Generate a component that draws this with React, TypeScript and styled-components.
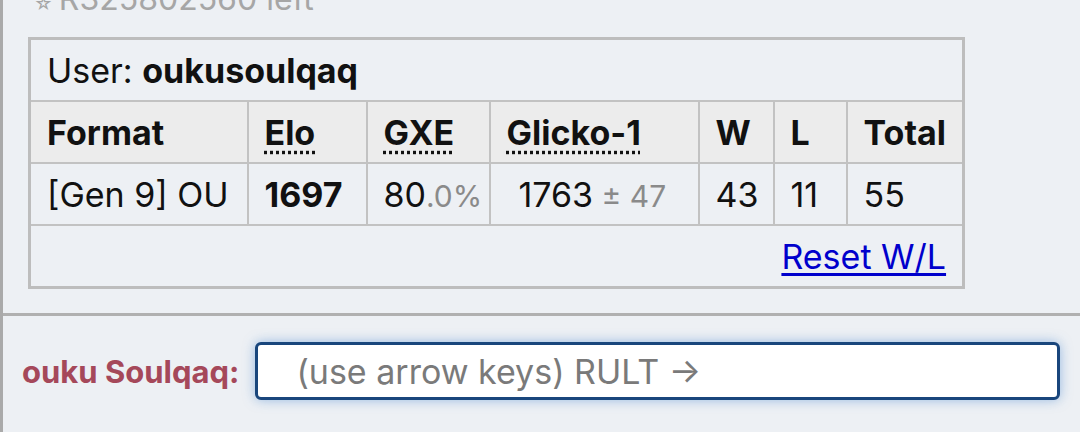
import React from "react";
import styled, { createGlobalStyle } from "styled-components";

const GlobalStyle = createGlobalStyle`
  html, body {
    margin: 0;
    padding: 0;
    background: #edf0f4;
    font-family: Inter, "Noto Sans", sans-serif;
    overflow: hidden;
  }
`;

const Room = styled.div`
  width: 1080px;
  height: 432px;
  border-left: 3px solid #aaa;
  box-sizing: border-box;
  display: flex;
  flex-direction: column;
`;

const Log = styled.div`
  height: 316px;
  flex: none;
  padding-left: 25px;
  box-sizing: border-box;
  overflow: hidden;
  border-bottom: 3px solid #b0b0b0;
`;

const Notice = styled.div`
  height: 53px;
  margin-top: -16px;
  padding-left: 6px;
  font-size: 32px;
  line-height: 30px;
  color: #a6a6a6;
  .star {
    font-size: 18px;
    margin-right: 6px;
  }
`;

const Ladder = styled.table`
  border-collapse: collapse;
  table-layout: fixed;
  border: 3px solid #bdbdbd;
  width: 934px;
  font-size: 34px;
  color: #111;
  td,
  th {
    border: 2px solid #c2c2c2;
    height: 60px;
    padding: 0 0 0 16px;
    text-align: left;
    white-space: nowrap;
  }
  th {
    background: #ececec;
    font-weight: 700;
  }
`;

const Cell = styled.td<{ $indent?: boolean; $bold?: boolean }>`
  padding-left: ${(p) => (p.$indent ? "28px" : "16px")} !important;
  font-weight: ${(p) => (p.$bold ? 700 : 400)};
`;

const Abbr = styled.abbr`
  text-decoration: underline dotted;
  text-underline-offset: 6px;
`;

const Faded = styled.span`
  color: #8a8a8a;
  font-size: 30px;
`;

const FooterCell = styled.td`
  text-align: right !important;
  padding-right: 16px !important;
  a {
    color: #0000cc;
    text-decoration: underline;
    text-underline-offset: 4px;
  }
`;

const ChatBar = styled.div`
  flex: 1;
  display: flex;
  align-items: center;
  padding: 0 20px 6px 19px;
  gap: 16px;
`;

const Speaker = styled.label`
  color: #a5485a;
  font-weight: 700;
  font-size: 31px;
  white-space: nowrap;
`;

const Input = styled.div`
  flex: 1;
  height: 52px;
  border: 3px solid #19467c;
  border-radius: 6px;
  background: #fff;
  box-shadow: 0 0 12px rgba(80, 140, 210, 0.55);
  display: flex;
  align-items: center;
  padding-left: 38px;
  font-size: 34px;
  color: #7a7a7a;
`;

const columns = [218, 119, 123, 209, 75, 73, 117];

export default function App() {
  return (
    <>
      <GlobalStyle />
      <Room>
        <Log>
          <Notice>
            <span className="star">☆</span>R325802560 left
          </Notice>
          <Ladder>
            <colgroup>
              {columns.map((w, i) => (
                <col key={i} style={{ width: w }} />
              ))}
            </colgroup>
            <tbody>
              <tr>
                <td colSpan={7}>
                  User: <strong>oukusoulqaq</strong>
                </td>
              </tr>
              <tr>
                <th>Format</th>
                <th>
                  <Abbr title="Elo rating">Elo</Abbr>
                </th>
                <th>
                  <Abbr title="user's percentage chance of winning a random battle">GXE</Abbr>
                </th>
                <th>
                  <Abbr title="Glicko-1 rating">Glicko-1</Abbr>
                </th>
                <th>W</th>
                <th>L</th>
                <th>Total</th>
              </tr>
              <tr>
                <Cell>[Gen 9] OU</Cell>
                <Cell $bold>1697</Cell>
                <Cell>
                  80<Faded>.0%</Faded>
                </Cell>
                <Cell $indent>
                  1763<Faded> ± 47</Faded>
                </Cell>
                <Cell>43</Cell>
                <Cell>11</Cell>
                <Cell>55</Cell>
              </tr>
              <tr>
                <FooterCell colSpan={7}>
                  <a href="#reset">Reset W/L</a>
                </FooterCell>
              </tr>
            </tbody>
          </Ladder>
        </Log>
        <ChatBar>
          <Speaker>ouku Soulqaq:</Speaker>
          <Input>(use arrow keys) RULT →</Input>
        </ChatBar>
      </Room>
    </>
  );
}
